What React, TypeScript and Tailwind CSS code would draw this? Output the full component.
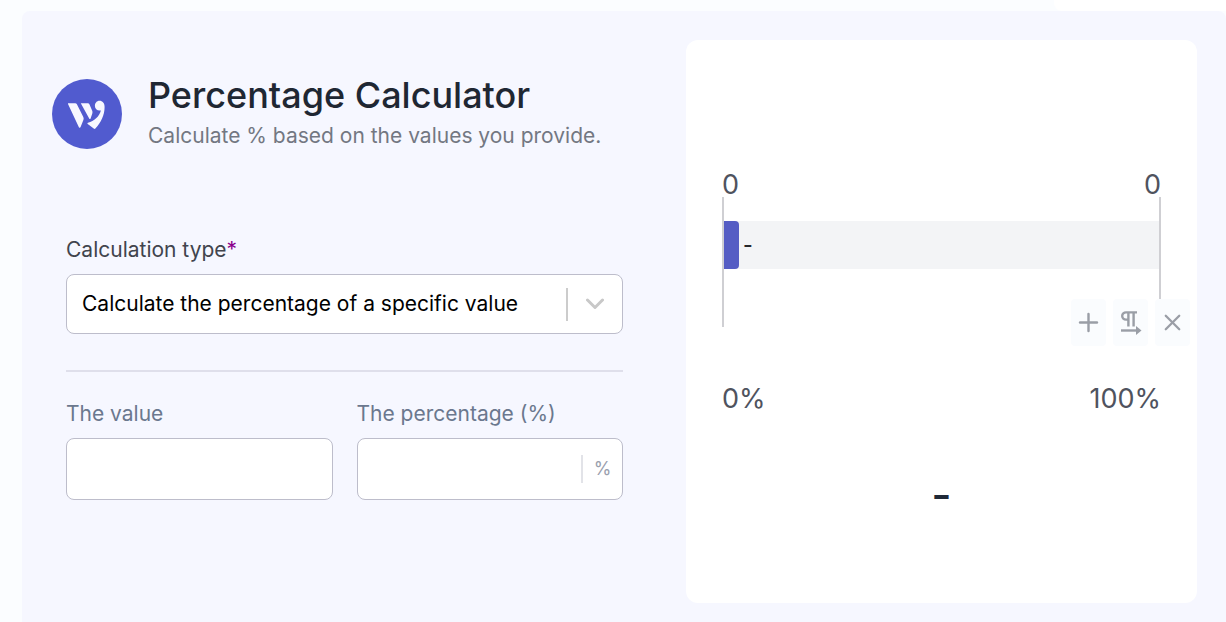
import React, { useState } from "react";
import { LuPlus, LuX } from "react-icons/lu";

const calculationTypes = [
  "Calculate the percentage of a specific value",
  "Calculate what percentage one value is of another",
  "Calculate the percentage change",
];

const Logo = () => (
  <svg viewBox="0 0 70 70" className="h-[70px] w-[70px] shrink-0" aria-hidden="true">
    <circle cx="35" cy="35" r="35" fill="#515bcf" />
    <g fill="#f7f8ff">
      <path d="M16 24.2h7.200c.8 0 1.300.4 1.700 1.100l6.400 12.600c.5 1 .5 2 .1 3l-2.800 7.200c-.4.900-1.200.900-1.700.100L16 25z" />
      <path d="M28.800 24.200h7c.8 0 1.300.3 1.600 1l2.800 6.500c.4.900.4 1.800.1 2.700l-1.700 5c-.3.800-1 .800-1.400.100z" />
      <path d="M47.400 21.800c3.200 0 5.200 2.300 5.200 6.200 0 8-3.700 15.700-9.200 21.500-.6.500-1.200.500-1.700 0l-6-4.600c-.5-.5-.4-1 .3-1.200 6.200-1.700 11.200-6.200 12.900-12.300-3.400.6-6-1.400-6-4.500 0-3 2-5.100 4.500-5.100z" />
    </g>
  </svg>
);

const ParagraphDirectionIcon = () => (
  <svg viewBox="0 0 22 24" className="h-6 w-[22px]" fill="none" stroke="currentColor" strokeWidth="2.4" aria-hidden="true">
    <path d="M17 1.400H6a3.800 3.600 0 0 0 0 7.200H8.400M8.400 1.400v14M13.600 1.400v14" />
    <path d="M1 19.500h17" />
    <path d="M16 15l5.500 4.500-5.500 4.500z" fill="currentColor" stroke="none" />
  </svg>
);

const Toolbar = () => {
  const button = "flex h-[47px] w-[35px] items-center justify-center rounded-sm bg-[#fafcfe] text-[#9a9ea6]";
  return (
    <div className="absolute top-[259px] right-[7px] flex gap-[7px]">
      <button type="button" aria-label="Add" className={button}>
        <LuPlus size={29} strokeWidth={2} />
      </button>
      <button type="button" aria-label="Text direction" className={button}>
        <ParagraphDirectionIcon />
      </button>
      <button type="button" aria-label="Close" className={button}>
        <LuX size={27} strokeWidth={2} />
      </button>
    </div>
  );
};

const CalculatorForm = () => {
  const [type, setType] = useState(calculationTypes[0]);
  const [value, setValue] = useState("");
  const [percentage, setPercentage] = useState("");

  return (
    <form className="mt-[84px] ml-3.5">
      <label htmlFor="type" className="block text-[21px] leading-7 text-[#41444d]">
        Calculation type<span className="text-[#8b008b]">*</span>
      </label>
      <div className="relative mt-[10px]">
        <select
          id="type"
          value={type}
          onChange={(e) => setType(e.target.value)}
          className="block h-[60px] w-full appearance-none rounded-lg border border-[#bdbdcb] bg-white pr-16 pl-[15px] text-[21px] text-black"
        >
          {calculationTypes.map((item) => (
            <option key={item}>{item}</option>
          ))}
        </select>
        <div className="pointer-events-none absolute inset-y-0 right-[19px] flex items-center gap-[18px]">
          <span className="h-[33px] w-0.5 bg-[#cccccc]" />
          <svg viewBox="0 0 18 12" className="h-3 w-[18px]" fill="none" stroke="#c8c8c8" strokeWidth="3" aria-hidden="true">
            <path d="M1.500 2L9 9.500 16.500 2" strokeLinecap="round" strokeLinejoin="round" />
          </svg>
        </div>
      </div>

      <hr className="mt-9 border-t-2 border-[#dfdfeb]" />

      <div className="mt-7 grid grid-cols-2 gap-6">
        <div>
          <label htmlFor="value" className="block text-[21px] leading-7 text-[#6b788e]">
            The value
          </label>
          <input
            id="value"
            value={value}
            onChange={(e) => setValue(e.target.value)}
            className="mt-[10px] block h-[62px] w-full rounded-lg border border-[#bdbdcb] bg-white px-4 text-[21px]"
          />
        </div>
        <div>
          <label htmlFor="percentage" className="block text-[21px] leading-7 text-[#6b788e]">
            The percentage (%)
          </label>
          <div className="mt-[10px] flex h-[62px] items-center rounded-lg border border-[#bdbdcb] bg-white">
            <input
              id="percentage"
              value={percentage}
              onChange={(e) => setPercentage(e.target.value)}
              className="h-full min-w-0 flex-1 rounded-lg px-4 text-[21px]"
            />
            <span className="flex h-7 w-[41px] items-center justify-center border-l-2 border-[#e2e3e8] text-lg text-[#9a9fae]">%</span>
          </div>
        </div>
      </div>
    </form>
  );
};

const ResultCard = () => (
  <div className="relative rounded-xl bg-white px-9 pt-[132px] pb-[87px] text-[#4f535e]">
    {/* scale */}
    <div className="flex justify-between text-[27px] leading-[25px]">
      <span>0</span>
      <span>0</span>
    </div>
    <div className="h-[130px] border-x-2 border-[#cfcfd3] pt-6">
      <div className="flex h-12 items-center bg-[#f3f4f6]">
        <div className="h-full w-[15px] rounded-r-sm bg-[#555dc4]" />
        <span className="ml-1 text-[21px] font-medium text-[#25272c]">-</span>
      </div>
    </div>
    <div className="mt-[59px] flex justify-between text-[27px] leading-[25px]">
      <span>0%</span>
      <span>100%</span>
    </div>
    {/* result */}
    <p className="mt-[63px] text-center text-[44px] leading-[42px] font-medium text-[#1f2937]">-</p>
    <Toolbar />
  </div>
);

const App = () => {
  return (
    <div className="flex min-h-screen flex-col bg-[#fbfdff] font-['Inter',sans-serif]">
      <div className="flex h-[11px] justify-end">
        <div className="w-[14%] rounded-bl-lg bg-white" />
      </div>
      <main className="ml-[22px] grid flex-1 grid-cols-[571fr_511fr] items-start gap-[63px] rounded-t-lg bg-[#f6f7ff] pt-[29px] pr-[29px] pb-[19px] pl-[30px]">
        <section>
          {/* header */}
          <div className="mt-9 flex items-center gap-[26px]">
            <Logo />
            <div>
              <h1 className="text-4xl leading-[38px] font-medium text-[#1f2733]">Percentage Calculator</h1>
              <p className="mt-1.5 text-[21px] leading-8 text-[#737782]">Calculate % based on the values you provide.</p>
            </div>
          </div>
          <CalculatorForm />
        </section>
        <ResultCard />
      </main>
    </div>
  );
};

export default App;
